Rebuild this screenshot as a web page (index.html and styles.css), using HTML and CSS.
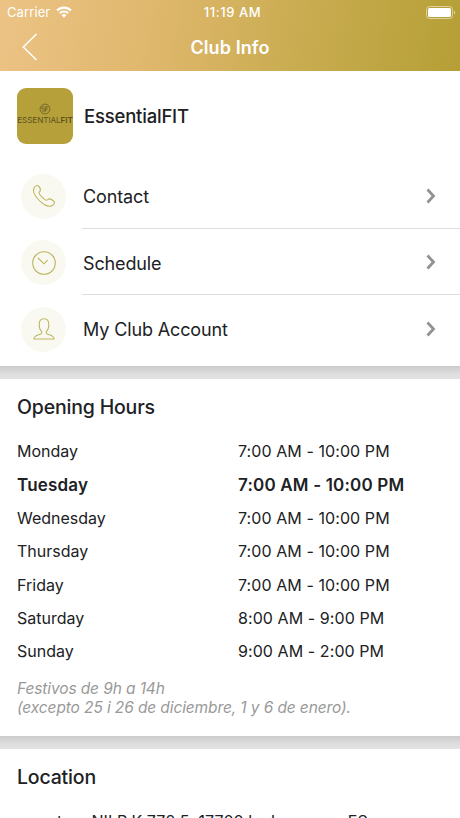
FILE: index.html
```html
<!DOCTYPE html>
<html lang="en">
<head>
    <meta charset="UTF-8">
    <meta name="viewport" content="width=device-width, initial-scale=1.0">
    <title>Club Info</title>
    <link rel="stylesheet" href="styles.css">
</head>
<body>
    <header class="header">
        <div class="status-bar">
            <div class="carrier">
                <span>Carrier</span>
                <svg class="wifi" width="16" height="12" viewBox="0 0 16 12">
                    <path d="M1.1 4.5a9.8 9.8 0 0 1 13.8 0" fill="none" stroke="#fff" stroke-width="2.2"/>
                    <path d="M3.7 7.2a6.1 6.1 0 0 1 8.6 0" fill="none" stroke="#fff" stroke-width="2"/>
                    <path d="M5.6 9.3a3.4 3.4 0 0 1 4.8 0L8 11.7z" fill="#fff"/>
                </svg>
            </div>
            <span class="clock">11:19 AM</span>
            <svg class="battery" width="30" height="13" viewBox="0 0 30 13">
                <rect x=".5" y=".5" width="26" height="12" rx="3" fill="none" stroke="#fff" stroke-opacity=".5"/>
                <rect x="2" y="2" width="23" height="9" rx="1.6" fill="#fff"/>
                <path d="M28 4.5q2.2 2 0 4z" fill="#fff" fill-opacity=".6"/>
            </svg>
        </div>
        <div class="nav-bar">
            <svg class="back" width="16" height="28" viewBox="0 0 16 28">
                <path d="M14.5 1 1.3 14l13.2 13" fill="none" stroke="#fff" stroke-width="1.5"/>
            </svg>
            <h1 class="title">Club Info</h1>
        </div>
    </header>

    <section class="club">
        <div class="club-header">
            <div class="logo">
                <svg width="12" height="12" viewBox="0 0 11 12">
                    <circle cx="5.5" cy="6" r="4.9" fill="none" stroke="#5d5320" stroke-width=".7"/>
                    <path d="M5 3.8H3.2a1 1 0 0 0 0 2.1h1.3a1 1 0 0 1 0 2.2H2.6M6.2 8.5V3.8h2.5M6.2 6h2" fill="none" stroke="#5d5320" stroke-width=".7"/>
                </svg>
                <span class="logo-text">ESSENTIAL<b>FIT</b></span>
            </div>
            <h2 class="club-name">EssentialFIT</h2>
        </div>

        <div class="menu-item">
            <span class="menu-icon">
                <svg width="24" height="24" viewBox="0 0 24 24">
                    <path d="M2 4.2C2.7 2.700 4.500 1.200 5.800 1.700c1.400.6 2.600 2.800 2.600 4.300 0 1.300-1.500 1.800-1.400 3 .2 1.700 5.500 7 7.300 7.200 1.200.1 1.800-1.400 3.200-1.300 1.500.1 4.400 1.800 4.800 3.100.4 1.300-1 3-2.400 3.700C15.500 23.800 8.700 18.600 5.400 14.500 2.900 11.400.4 7.300 2 4.200z"/>
                </svg>
            </span>
            <div class="menu-row">
                <span class="menu-label">Contact</span>
                <svg class="chevron" width="10" height="16" viewBox="0 0 10 16"><path d="M1.5 1.5l6 6.500-6 6.500"/></svg>
            </div>
        </div>
        <div class="menu-item">
            <span class="menu-icon">
                <svg width="24" height="24" viewBox="0 0 24 24">
                    <circle cx="12" cy="12" r="11.3"/>
                    <path d="M6 7l6 5.800 3.600-3.600"/>
                </svg>
            </span>
            <div class="menu-row">
                <span class="menu-label">Schedule</span>
                <svg class="chevron" width="10" height="16" viewBox="0 0 10 16"><path d="M1.5 1.5l6 6.500-6 6.500"/></svg>
            </div>
        </div>
        <div class="menu-item">
            <span class="menu-icon">
                <svg width="24" height="24" viewBox="0 0 24 24">
                    <path d="M9.700 14.400C8 13 7.200 10.500 7.200 7.400 7.200 3.500 9 1.700 12 1.700s4.800 1.800 4.800 5.700c0 3.100-.8 5.600-2.500 7-.3 2.100.4 2.500 3.100 3.300 3 .9 4.500 1.700 4.600 4.300H2c.1-2.600 1.600-3.400 4.600-4.300 2.700-.8 3.400-1.200 3.100-3.300z"/>
                </svg>
            </span>
            <div class="menu-row">
                <span class="menu-label">My Club Account</span>
                <svg class="chevron" width="10" height="16" viewBox="0 0 10 16"><path d="M1.5 1.5l6 6.500-6 6.500"/></svg>
            </div>
        </div>
    </section>

    <div class="divider"></div>

    <section class="hours">
        <h2 class="section-title">Opening Hours</h2>
        <dl class="hours-list">
            <div class="day"><dt>Monday</dt><dd>7:00 AM - 10:00 PM</dd></div>
            <div class="day today"><dt>Tuesday</dt><dd>7:00 AM - 10:00 PM</dd></div>
            <div class="day"><dt>Wednesday</dt><dd>7:00 AM - 10:00 PM</dd></div>
            <div class="day"><dt>Thursday</dt><dd>7:00 AM - 10:00 PM</dd></div>
            <div class="day"><dt>Friday</dt><dd>7:00 AM - 10:00 PM</dd></div>
            <div class="day"><dt>Saturday</dt><dd>8:00 AM - 9:00 PM</dd></div>
            <div class="day"><dt>Sunday</dt><dd>9:00 AM - 2:00 PM</dd></div>
        </dl>
        <p class="note">Festivos de 9h a 14h<br>(excepto 25 i 26 de diciembre, 1 y 6 de enero).</p>
    </section>

    <div class="divider"></div>

    <section class="location">
        <h2 class="section-title">Location</h2>
        <p class="address">carretera NII P.K 772,5, 17700 la Jonquera, ES</p>
    </section>
</body>
</html>
```
FILE: styles.css
```css
* {
    box-sizing: border-box;
}
body {
    margin: 0;
    height: 818px;
    overflow: hidden;
    font-family: Inter, sans-serif;
    color: #202124;
    background: white;
}
h1, h2, p, dl, dd {
    margin: 0;
}
.header {
    height: 71px;
    color: white;
    background: linear-gradient(100deg, #ecc385 0%, #dfb76c 34%, #cbad53 62%, #b59f35 100%);
}
.status-bar {
    display: grid;
    grid-template-columns: 1fr auto 1fr;
    align-items: center;
    height: 24px;
    padding: 0 4px 0 7px;
    font-size: 13px;
}
.carrier {
    display: flex;
    align-items: center;
    gap: 6px;
    letter-spacing: 0.1px;
}
.clock {
    padding-left: 2px;
    font-weight: 500;
    letter-spacing: 0.6px;
}
.battery {
    justify-self: end;
}
.nav-bar {
    display: grid;
    grid-template-columns: 1fr auto 1fr;
    align-items: center;
    height: 46px;
    padding: 0 22px;
}
.title {
    font-size: 18px;
    font-weight: 600;
    letter-spacing: 0.1px;
}
.club {
    height: 295px;
    padding-top: 17px;
}
.club-header {
    display: flex;
    align-items: center;
    gap: 11px;
    height: 56px;
    margin-bottom: 18px;
    padding-left: 17px;
}
.logo {
    display: flex;
    flex-direction: column;
    align-items: center;
    width: 56px;
    height: 56px;
    padding-top: 15px;
    color: #5d5320;
    background: #b5a03a;
    border-radius: 9px;
}
.logo-text {
    font-size: 8.2px;
    line-height: 11px;
    letter-spacing: -0.1px;
    white-space: nowrap;
}
.logo-text b {
    font-weight: 600;
}
.club-name {
    font-size: 18.5px;
    font-weight: 500;
    letter-spacing: -0.2px;
}
.menu-item {
    display: flex;
    align-items: center;
    height: 66.6px;
    padding-left: 21px;
}
.menu-icon {
    display: flex;
    align-items: center;
    justify-content: center;
    width: 45px;
    height: 45px;
    margin: 2px 16px 0 0;
    background: #f9f9f1;
    border-radius: 50%;
}
.menu-icon svg {
    fill: none;
    stroke: #bdb660;
    stroke-width: 1.1;
}
.menu-row {
    display: flex;
    flex: 1;
    align-items: center;
    justify-content: space-between;
    height: 100%;
    padding: 2px 24px 0 1px;
    border-bottom: 1px solid #dedede;
}
.menu-item:last-child .menu-row {
    border-bottom-color: transparent;
}
.menu-label {
    padding-top: 2px;
    font-size: 18px;
    letter-spacing: -0.13px;
}
.chevron {
    fill: none;
    stroke: #929292;
    stroke-width: 2.8;
}
.divider {
    height: 13px;
    background: linear-gradient(#cbcbcb, #dedede 60%, #e3e3e3);
}
.hours {
    height: 357px;
    padding: 15px 17px 0;
}
.section-title {
    font-size: 19.5px;
    font-weight: 500;
    line-height: 26px;
    letter-spacing: -0.18px;
}
.hours-list {
    margin-top: 15.4px;
}
.day {
    display: grid;
    grid-template-columns: 221px 1fr;
    height: 33.3px;
    font-size: 16px;
    line-height: 33px;
}
.day dd {
    letter-spacing: 0.08px;
}
.today dt,
.today dd {
    font-size: 17px;
    font-weight: 600;
    letter-spacing: 0.18px;
}
.note {
    margin-top: 11.6px;
    font-size: 15.5px;
    font-style: italic;
    line-height: 18.5px;
    letter-spacing: -0.11px;
    color: #999;
}
.location {
    padding: 15px 17px 0;
}
.address {
    margin-top: 20px;
    font-size: 16px;
    line-height: 22px;
    letter-spacing: 0.09px;
    white-space: nowrap;
}
```
